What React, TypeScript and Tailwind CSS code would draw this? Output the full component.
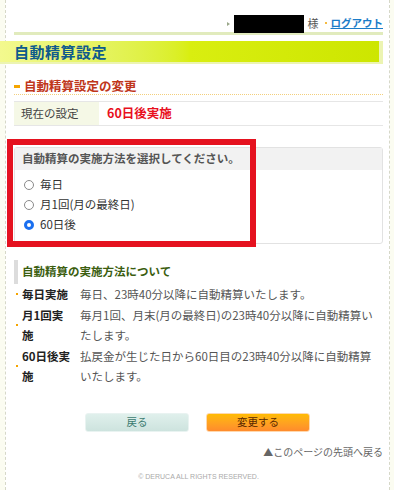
const rows = [
  { term: "毎日実施", desc: "毎日、23時40分以降に自動精算いたします。" },
  { term: "月1回実施", desc: "毎月1回、月末(月の最終日)の23時40分以降に自動精算いたします。" },
  { term: "60日後実施", desc: "払戻金が生じた日から60日目の23時40分以降に自動精算いたします。" },
];

const options = [
  { label: "毎日", checked: false },
  { label: "月1回(月の最終日)", checked: false },
  { label: "60日後", checked: true },
];

function Radio({ checked }: { checked: boolean }) {
  return checked ? (
    <span className="w-[10px] h-[10px] rounded-full border-[3px] border-[#1a6ff0] bg-white" />
  ) : (
    <span className="w-[10px] h-[10px] rounded-full border border-[#8a8a8a] bg-white" />
  );
}

export default function App() {
  return (
    <div className="min-h-screen bg-[#fbfcf1] font-['Noto_Sans_CJK_JP','Noto_Sans',sans-serif]">
      <div className="ml-[5px] w-[385px] min-h-screen border-x border-dashed border-[#d6d8c8] bg-white pl-[8px] pr-[6px]">
        {/* top bar */}
        <div className="flex h-[32px] pt-[15px] justify-end items-start">
          <span className="mt-[7px] mr-[4px] w-0 h-0 border-y-[2px] border-y-transparent border-l-[3px] border-l-[#9aa88a]" />
          <span className="w-[70px] h-[18px] bg-black" />
          <span className="ml-[4px] text-[11px] leading-[16px] text-[#555]">様</span>
          <span className="ml-[6px] mt-[7px] w-[2px] h-[2px] rounded-full bg-[#f2a400]" />
          <a href="#" className="ml-[4px] text-[10.5px] leading-[16px] font-bold text-[#1b7cc8] underline">
            ログアウト
          </a>
        </div>
        <div className="h-[3px] bg-[#e1ebbd]" />

        {/* page title */}
        <div className="-ml-[14px] mt-[6px] h-[23px] border-r-[4px] border-b-[2px] border-[#ecf4b2] bg-gradient-to-r from-[#f3f98e] via-[#d9ee10] to-[#cde600] pl-[14px] flex items-center">
          <h1 className="text-[15px] font-bold tracking-[0.5px] text-[#0f5b8c] leading-none">自動精算設定</h1>
        </div>

        {/* section heading */}
        <div className="mt-[14px] h-[17px] flex items-center border-b border-dotted border-[#f3cf7c]">
          <span className="w-[6px] h-[3px] bg-[#f5a500]" />
          <h2 className="ml-[4px] text-[12.5px] font-bold text-[#c0361a] leading-none">自動精算設定の変更</h2>
        </div>

        {/* current setting */}
        <div className="mt-[6px] flex h-[25px] border-y border-[#e6e6e6]">
          <div className="w-[85px] bg-[#f5f8e6] pl-[7px] flex items-center text-[11.5px] text-[#444]">現在の設定</div>
          <div className="pl-[8px] flex items-center text-[12.5px] font-bold text-[#e8101e]">60日後実施</div>
        </div>

        {/* method select */}
        <div className="relative mt-[21px] rounded-[3px] border border-[#e2e2e2]">
          <div className="h-[22px] bg-[#f2f2f2] pl-[7px] flex items-center text-[11.5px] font-bold text-[#555]">
            自動精算の実施方法を選択してください。
          </div>
          <div className="pt-[5px] pb-[8px] pl-[9px]">
            {options.map((o) => (
              <label key={o.label} className="flex h-[20px] items-center gap-[6px] text-[11.5px] text-[#333]">
                <Radio checked={o.checked} />
                {o.label}
              </label>
            ))}
          </div>
          {/* highlight annotation */}
          <div className="absolute -left-[8px] -top-[9px] w-[249px] h-[108px] border-[6px] border-[#e5121f] pointer-events-none" />
        </div>

        {/* about methods */}
        <div className="mt-[16px] h-[24px] border-l-[4px] border-[#dcdcdc] pl-[4px] flex items-center">
          <h3 className="text-[11.5px] font-bold text-[#3b5e10]">自動精算の実施方法について</h3>
        </div>
        <div className="pr-[3px]">
          {rows.map((r) => (
            <div key={r.term} className="flex text-[11.5px] leading-[20.5px]">
              <div className="w-[8px] flex items-center pl-[2px]">
                <span className="w-[2px] h-[2px] bg-[#f5a500]" />
              </div>
              <div className="w-[50px] mr-[8px] shrink-0 font-bold text-[#222]">{r.term}</div>
              <div className="flex-1 text-[#555]">{r.desc}</div>
            </div>
          ))}
        </div>

        {/* buttons */}
        <div className="mt-[26px] flex justify-center gap-[17px] pr-[2px]">
          <button className="w-[104px] h-[19px] rounded-[3px] border border-[#e9f3f1] bg-gradient-to-b from-[#e0f0ec] to-[#cde3de] text-[10.5px] text-[#3b7b70] leading-none">
            戻る
          </button>
          <button className="w-[104px] h-[19px] rounded-[3px] border border-[#ffd8ae] bg-gradient-to-b from-[#ffbb00] to-[#ff8b2c] text-[10.5px] text-[#5a2800] leading-none">
            変更する
          </button>
        </div>

        <div className="mt-[14px] flex justify-end">
          <a href="#" className="text-[10px] leading-[12px] text-[#666]">▲このページの先頭へ戻る</a>
        </div>

        <p className="mt-[14px] text-center font-['Liberation_Sans',sans-serif] text-[7px] leading-[10px] text-[#aaa] pb-[8px]">
          © DERUCA ALL RIGHTS RESERVED.
        </p>
      </div>
    </div>
  );
}
